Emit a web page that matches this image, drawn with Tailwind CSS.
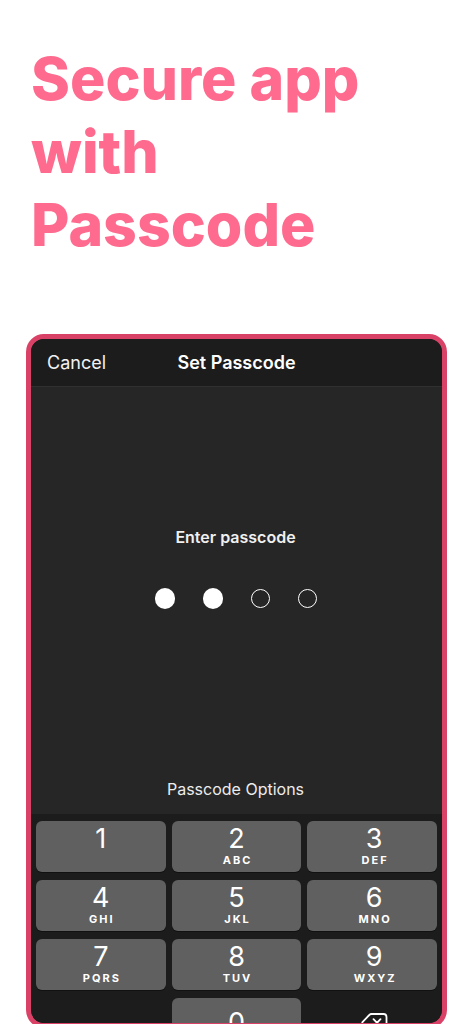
<!DOCTYPE html>
<html lang="en">
<head>
<meta charset="utf-8">
<meta name="viewport" content="width=device-width, initial-scale=1">
<title>Secure app with Passcode</title>
<script src="https://cdn.jsdelivr.net/npm/@tailwindcss/browser@4"></script>
</head>
<body class="bg-white font-['Inter','Liberation_Sans',sans-serif]">
<main class="flex h-screen flex-col overflow-hidden px-[26px] pt-[42px]">
  <h1 class="mb-[73px] pl-[5px] text-[59px] leading-[73px] font-extrabold text-[#ff6b8e]">Secure app<br>with<br>Passcode</h1>
  <section class="-mb-1 flex min-h-0 flex-1 flex-col overflow-hidden rounded-[18px] border-[5px] border-[#d94266] bg-[#262626] text-white">
    <header class="grid h-12 shrink-0 grid-cols-[1fr_auto_1fr] items-center border-b border-[#303030] bg-[#1c1c1c] px-4 text-[18px] leading-6">
      <button class="justify-self-start text-[#f2f2f2]">Cancel</button>
      <h2 class="font-semibold">Set Passcode</h2>
    </header>
    <div class="flex min-h-0 flex-1 flex-col items-center pr-[2px]">
      <p class="mt-[138px] text-[16px] leading-6 font-semibold text-[#f0f0f0]">Enter passcode</p>
      <div class="mt-[39px] flex items-center gap-7" role="img" aria-label="2 of 4 digits entered">
        <span class="h-[21px] w-5 rounded-full bg-white"></span>
        <span class="h-[21px] w-5 rounded-full bg-white"></span>
        <span class="size-[19px] rounded-full border border-white"></span>
        <span class="size-[19px] rounded-full border border-white"></span>
      </div>
      <button class="mt-auto mb-[13px] text-[16px] leading-6 text-[#ececec]">Passcode Options</button>
    </div>
    <div class="grid h-[209px] shrink-0 auto-rows-[51px] grid-cols-3 gap-x-[6px] gap-y-2 overflow-hidden bg-[#1c1c1c] px-[5px] pt-[7px]">
      <button class="flex flex-col items-center rounded-md bg-[#606060] pt-[3px] shadow-[0_1px_0_#111]"><span class="text-[27px] leading-[30px] font-normal">1</span></button>
      <button class="flex flex-col items-center rounded-md bg-[#606060] pt-[3px] shadow-[0_1px_0_#111]"><span class="text-[27px] leading-[30px] font-normal">2</span><span class="pl-[2px] text-[11px] leading-[12px] font-bold tracking-[2px]">ABC</span></button>
      <button class="flex flex-col items-center rounded-md bg-[#606060] pt-[3px] pl-1 shadow-[0_1px_0_#111]"><span class="text-[27px] leading-[30px] font-normal">3</span><span class="pl-[2px] text-[11px] leading-[12px] font-bold tracking-[2px]">DEF</span></button>
      <button class="flex flex-col items-center rounded-md bg-[#606060] pt-[3px] shadow-[0_1px_0_#111]"><span class="text-[27px] leading-[30px] font-normal">4</span><span class="pl-[2px] text-[11px] leading-[12px] font-bold tracking-[2px]">GHI</span></button>
      <button class="flex flex-col items-center rounded-md bg-[#606060] pt-[3px] shadow-[0_1px_0_#111]"><span class="text-[27px] leading-[30px] font-normal">5</span><span class="pl-[2px] text-[11px] leading-[12px] font-bold tracking-[2px]">JKL</span></button>
      <button class="flex flex-col items-center rounded-md bg-[#606060] pt-[3px] pl-1 shadow-[0_1px_0_#111]"><span class="text-[27px] leading-[30px] font-normal">6</span><span class="pl-[2px] text-[11px] leading-[12px] font-bold tracking-[2px]">MNO</span></button>
      <button class="flex flex-col items-center rounded-md bg-[#606060] pt-[3px] shadow-[0_1px_0_#111]"><span class="text-[27px] leading-[30px] font-normal">7</span><span class="pl-[2px] text-[11px] leading-[12px] font-bold tracking-[2px]">PQRS</span></button>
      <button class="flex flex-col items-center rounded-md bg-[#606060] pt-[3px] shadow-[0_1px_0_#111]"><span class="text-[27px] leading-[30px] font-normal">8</span><span class="pl-[2px] text-[11px] leading-[12px] font-bold tracking-[2px]">TUV</span></button>
      <button class="flex flex-col items-center rounded-md bg-[#606060] pt-[3px] pl-1 shadow-[0_1px_0_#111]"><span class="text-[27px] leading-[30px] font-normal">9</span><span class="pl-[2px] text-[11px] leading-[12px] font-bold tracking-[2px]">WXYZ</span></button>
      <button class="col-start-2 flex flex-col items-center rounded-md bg-[#606060] pt-[10px]"><span class="text-[27px] leading-[30px] font-normal">0</span></button>
      <button class="flex flex-col items-center pt-[15px] pl-1" aria-label="Delete">
        <svg class="h-5 w-[27px]" viewBox="0 0 27 20" fill="none" stroke="white" stroke-width="1.8" stroke-linecap="round" stroke-linejoin="round"><path d="M10.500 1H22.500Q25.500 1 25.500 4V16Q25.500 19 22.500 19H10.500Q9.200 19 8.300 18L1.700 11.200Q.8 10 1.700 8.800L8.300 2Q9.200 1 10.500 1Z"/><path d="M12.500 6.200L19.500 13.500M19.500 6.200L12.500 13.500"/></svg>
      </button>
    </div>
  </section>
</main>
</body>
</html>
